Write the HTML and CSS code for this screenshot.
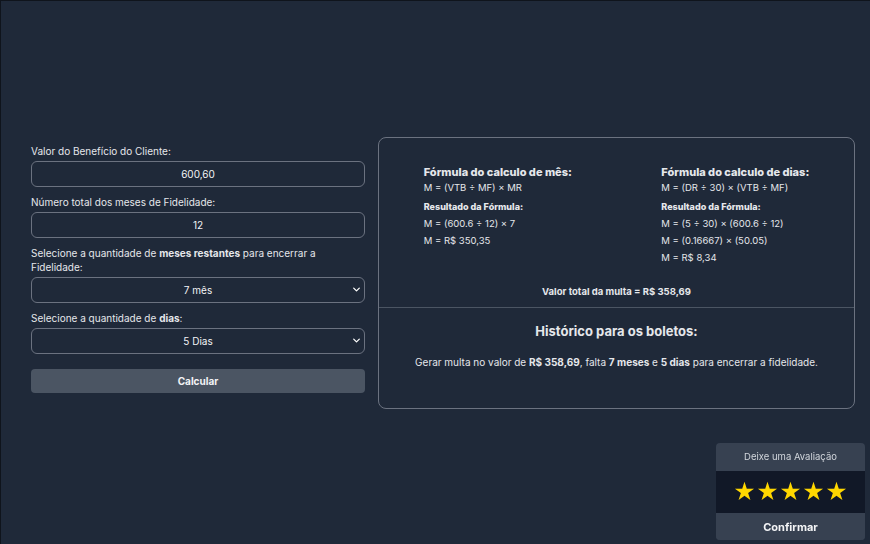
FILE: index.html
```html
<!DOCTYPE html>
<html lang="pt-BR">
<head>
    <meta charset="UTF-8">
    <meta name="viewport" content="width=device-width, initial-scale=1.0">
    <title>Calculadora de Multa</title>
    <link rel="stylesheet" href="styles.css">
</head>
<body>
    <div class="page">
        <form class="calc-form">
            <label>Valor do Benefício do Cliente:</label>
            <input type="text" value="600,60">

            <label>Número total dos meses de Fidelidade:</label>
            <input type="text" value="12">

            <label>Selecione a quantidade de <b>meses restantes</b> para encerrar a Fidelidade:</label>
            <div class="select-box">
                <select>
                    <option>7 mês</option>
                </select>
                <svg class="chevron" viewBox="0 0 10 6"><path d="M1 1l4 4 4-4" fill="none" stroke="#fff" stroke-width="1.8" stroke-linecap="round" stroke-linejoin="round"/></svg>
            </div>

            <label>Selecione a quantidade de <b>dias</b>:</label>
            <div class="select-box">
                <select>
                    <option>5 Dias</option>
                </select>
                <svg class="chevron" viewBox="0 0 10 6"><path d="M1 1l4 4 4-4" fill="none" stroke="#fff" stroke-width="1.8" stroke-linecap="round" stroke-linejoin="round"/></svg>
            </div>

            <button type="button">Calcular</button>
        </form>

        <div class="result">
            <div class="formulas">
                <div class="formula">
                    <h3>Fórmula do calculo de mês:</h3>
                    <p>M = (VTB ÷ MF) × MR</p>
                    <h4>Resultado da Fórmula:</h4>
                    <p>M = (600.6 ÷ 12) × 7</p>
                    <p>M = R$ 350,35</p>
                </div>
                <div class="formula">
                    <h3>Fórmula do calculo de dias:</h3>
                    <p>M = (DR ÷ 30) × (VTB ÷ MF)</p>
                    <h4>Resultado da Fórmula:</h4>
                    <p>M = (5 ÷ 30) × (600.6 ÷ 12)</p>
                    <p>M = (0.16667) × (50.05)</p>
                    <p>M = R$ 8,34</p>
                </div>
            </div>
            <div class="total">Valor total da multa = R$ 358,69</div>
            <div class="history">
                <h2>Histórico para os boletos:</h2>
                <p>Gerar multa no valor de <b>R$ 358,69</b>, falta <b>7 meses</b> e <b>5 dias</b> para encerrar a fidelidade.</p>
            </div>
        </div>
    </div>

    <div class="rating">
        <div class="rating-title">Deixe uma Avaliação</div>
        <div class="stars">★★★★★</div>
        <button type="button" class="rating-btn">Confirmar</button>
    </div>
</body>
</html>
```

FILE: styles.css
```css
body {
    margin: 0;
    height: 100vh;
    box-sizing: border-box;
    border-top: 1px solid #0f141c;
    border-left: 1px solid #0f141c;
    background-color: #1f2939;
    color: #e5e7eb;
    font-family: Inter, "Open Sans", sans-serif;
    font-size: 10px;
}
.page {
    height: 100%;
    display: flex;
    align-items: center;
    padding-left: 30px;
    gap: 13px;
}
.calc-form {
    width: 334px;
    margin-bottom: 9px;
    display: flex;
    flex-direction: column;
}
.calc-form label {
    line-height: 14px;
    margin-bottom: 3px;
}
.calc-form b {
    font-weight: 700;
}
input, select {
    width: 100%;
    height: 26px;
    box-sizing: border-box;
    margin-bottom: 8px;
    background: transparent;
    border: 1px solid #6b7280;
    border-radius: 6px;
    color: #f3f4f6;
    font-family: inherit;
    font-size: 10px;
    text-align: center;
    text-align-last: center;
}
select {
    appearance: none;
    -webkit-appearance: none;
}
.select-box {
    position: relative;
}
.chevron {
    position: absolute;
    right: 5px;
    top: 10px;
    width: 7px;
    height: 5px;
}
.calc-form button {
    margin-top: 7px;
    height: 24px;
    border: none;
    border-radius: 4px;
    background: #4b5563;
    color: #f3f4f6;
    font-family: inherit;
    font-size: 10px;
    font-weight: 700;
}
.result {
    width: 477px;
    height: 272px;
    box-sizing: border-box;
    border: 1px solid #6b7280;
    border-radius: 8px;
    display: flex;
    flex-direction: column;
}
.formulas {
    display: flex;
    justify-content: space-around;
    padding-top: 27px;
}
.formula h3 {
    margin: 0 0 2px;
    font-size: 11px;
    font-weight: 800;
    line-height: 14px;
}
.formula h4 {
    margin: 6px 0 4px;
    font-size: 9px;
    font-weight: 800;
    line-height: 13px;
}
.formula p {
    margin: 0 0 4px;
    font-size: 9.5px;
    line-height: 13px;
}
.total {
    margin-top: auto;
    padding-bottom: 10px;
    text-align: center;
    font-size: 9.5px;
    font-weight: 700;
    border-bottom: 1px solid #4b5563;
}
.history {
    height: 100px;
    text-align: center;
}
.history h2 {
    margin: 15px 0 0;
    font-size: 13px;
    font-weight: 700;
}
.history p {
    margin: 17px 0 0;
    font-size: 10px;
}
.rating {
    position: fixed;
    right: 5px;
    bottom: 4px;
    width: 149px;
    border-radius: 4px;
    overflow: hidden;
    background: #374151;
    text-align: center;
}
.rating-title {
    height: 28px;
    line-height: 28px;
    font-size: 9.5px;
    color: #d1d5db;
}
.stars {
    height: 42px;
    line-height: 42px;
    background: #111827;
    color: #ffd700;
    font-size: 22px;
    letter-spacing: 0;
}
.rating-btn {
    width: 100%;
    height: 27px;
    border: none;
    background: #374151;
    color: #f3f4f6;
    font-family: inherit;
    font-size: 11px;
    font-weight: 700;
}
```
